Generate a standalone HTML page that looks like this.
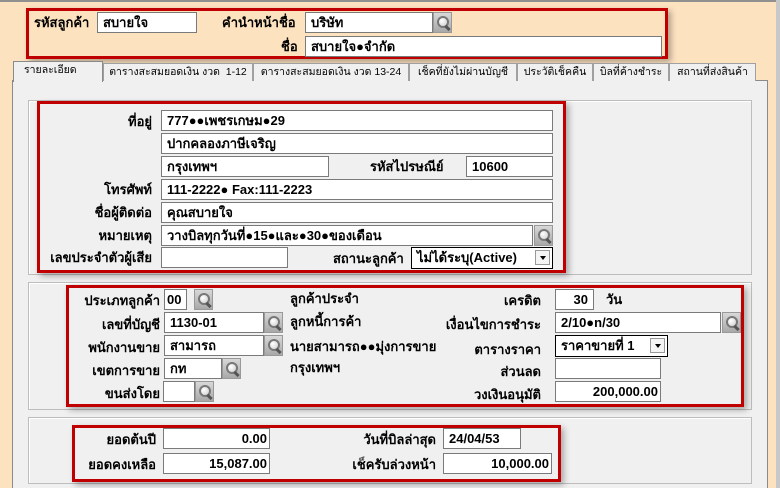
<!DOCTYPE html>
<html><head><meta charset="utf-8"><style>
*{box-sizing:border-box;margin:0;padding:0}
body{width:780px;height:488px;background:#fde2c0;position:relative;overflow:hidden;font-family:Tahoma,"Liberation Sans","DejaVu Sans",sans-serif;font-size:13px;font-weight:bold;color:#000}
.a{position:absolute}
.in{position:absolute;background:#fff;border:1px solid #7a7a7a;height:21px;padding:2px 5px;white-space:nowrap;overflow:hidden;line-height:16px}
.r{text-align:right}
.lb{position:absolute;white-space:nowrap;line-height:16px}
.lr{text-align:right}
.s{position:absolute;width:19px;height:21px;background:linear-gradient(#d8d8d8,#a8a8a8);border:1px solid #999}
.s:before{content:"";position:absolute;left:3px;top:3px;width:8px;height:8px;border:2px solid #777;border-radius:50%;background:radial-gradient(circle at 35% 35%,#fff,#ccc)}
.s:after{content:"";position:absolute;left:12px;top:12px;width:3px;height:6px;background:#555;transform:rotate(-45deg)}
.red{position:absolute;border:3px solid #c00000;box-shadow:3px 3px 6px rgba(0,0,0,.3)}
.grp{position:absolute;border:1px solid #bdbdbd;box-shadow:inset 1px 1px 0 #fff}
.tab{position:absolute;top:63px;height:18px;background:#f0f0f0;border:1px solid #a0a0a0;border-bottom:none;font-weight:normal;font-size:10.5px;text-align:center;line-height:16px;white-space:nowrap;overflow:hidden}
.dd{position:absolute;right:2px;top:2px;width:15px;height:15px;border:1px solid #999;background:#f4f4f4}
.dd:after{content:"";position:absolute;left:4px;top:5px;border-left:3px solid transparent;border-right:3px solid transparent;border-top:4px solid #000}
</style></head><body>
<div class="a" style="left:0;top:0;width:780px;height:2px;background:#909090"></div>
<div class="a" style="left:776px;top:0;width:4px;height:488px;background:#c8c8c8"></div>

<div class="red" style="left:26px;top:8px;width:642px;height:51px"></div>
<div class="lb" style="left:34px;top:15px">รหัสลูกค้า</div>
<div class="in" style="left:97px;top:12px;width:100px">สบายใจ</div>
<div class="lb" style="left:222px;top:15px">คำนำหน้าชื่อ</div>
<div class="in" style="left:305px;top:12px;width:128px">บริษัท</div>
<div class="s" style="left:433px;top:12px"></div>
<div class="lb" style="left:281px;top:39px">ชื่อ</div>
<div class="in" style="left:305px;top:36px;width:357px">สบายใจ●จำกัด</div>

<div class="a" style="left:12px;top:80px;width:756px;height:408px;background:#f0f0f0;border:1px solid #8a8a8a;border-bottom:none"></div>
<div class="tab" style="left:103px;width:150px">ตารางสะสมยอดเงิน งวด &nbsp;1-12</div>
<div class="tab" style="left:253px;width:156px">ตารางสะสมยอดเงิน งวด 13-24</div>
<div class="tab" style="left:409px;width:108px">เช็คที่ยังไม่ผ่านบัญชี</div>
<div class="tab" style="left:517px;width:76px">ประวัติเช็คคืน</div>
<div class="tab" style="left:593px;width:76px">บิลที่ค้างชำระ</div>
<div class="tab" style="left:669px;width:87px">สถานที่ส่งสินค้า</div>
<div class="tab" style="left:13px;top:61px;width:90px;height:21px;border-color:#8a8a8a;text-align:left;padding-left:10px">รายละเอียด</div>

<div class="grp" style="left:28px;top:100px;width:724px;height:175px"></div>
<div class="grp" style="left:28px;top:282px;width:724px;height:128px"></div>
<div class="grp" style="left:28px;top:417px;width:724px;height:67px"></div>

<div class="red" style="left:37px;top:101px;width:529px;height:172px"></div>
<div class="lb lr" style="left:40px;width:112px;top:114px">ที่อยู่</div>
<div class="in" style="left:161px;top:110px;width:392px">777●●เพชรเกษม●29</div>
<div class="in" style="left:161px;top:133px;width:392px">ปากคลองภาษีเจริญ</div>
<div class="in" style="left:161px;top:156px;width:168px">กรุงเทพฯ</div>
<div class="lb" style="left:370px;top:159px">รหัสไปรษณีย์</div>
<div class="in" style="left:466px;top:156px;width:87px">10600</div>
<div class="lb lr" style="left:40px;width:112px;top:182px">โทรศัพท์</div>
<div class="in" style="left:161px;top:179px;width:392px">111-2222● Fax:111-2223</div>
<div class="lb lr" style="left:40px;width:112px;top:205px">ชื่อผู้ติดต่อ</div>
<div class="in" style="left:161px;top:202px;width:392px">คุณสบายใจ</div>
<div class="lb lr" style="left:40px;width:112px;top:228px">หมายเหตุ</div>
<div class="in" style="left:161px;top:225px;width:372px">วางบิลทุกวันที่●15●และ●30●ของเดือน</div>
<div class="s" style="left:534px;top:225px"></div>
<div class="lb lr" style="left:40px;width:112px;top:250px">เลขประจำตัวผู้เสีย</div>
<div class="in" style="left:161px;top:247px;width:127px"></div>
<div class="lb" style="left:333px;top:251px">สถานะลูกค้า</div>
<div class="in" style="left:411px;top:247px;width:142px;border-color:#000;height:22px">ไม่ได้ระบุ(Active)<div class="dd"></div></div>

<div class="red" style="left:66px;top:285px;width:678px;height:122px"></div>
<div class="lb lr" style="left:60px;width:100px;top:293px">ประเภทลูกค้า</div>
<div class="in" style="left:164px;top:289px;width:23px;padding:2px 2px">00</div>
<div class="s" style="left:194px;top:289px"></div>
<div class="lb lr" style="left:60px;width:100px;top:317px">เลขที่บัญชี</div>
<div class="in" style="left:164px;top:312px;width:100px">1130-01</div>
<div class="s" style="left:264px;top:312px"></div>
<div class="lb lr" style="left:60px;width:100px;top:340px">พนักงานขาย</div>
<div class="in" style="left:164px;top:335px;width:100px">สามารถ</div>
<div class="s" style="left:264px;top:335px"></div>
<div class="lb lr" style="left:60px;width:100px;top:363px">เขตการขาย</div>
<div class="in" style="left:164px;top:358px;width:58px">กท</div>
<div class="s" style="left:222px;top:358px"></div>
<div class="lb lr" style="left:60px;width:100px;top:386px">ขนส่งโดย</div>
<div class="in" style="left:163px;top:381px;width:32px"></div>
<div class="s" style="left:195px;top:381px"></div>
<div class="lb" style="left:290px;top:291px">ลูกค้าประจำ</div>
<div class="lb" style="left:290px;top:314px">ลูกหนี้การค้า</div>
<div class="lb" style="left:290px;top:339px;width:176px;overflow:hidden">นายสามารถ●●มุ่งการขาย</div>
<div class="lb" style="left:290px;top:360px">กรุงเทพฯ</div>
<div class="lb lr" style="left:400px;width:141px;top:293px">เครดิต</div>
<div class="in r" style="left:555px;top:289px;width:39px">30</div>
<div class="lb" style="left:606px;top:292px">วัน</div>
<div class="lb lr" style="left:400px;width:141px;top:317px">เงื่อนไขการชำระ</div>
<div class="in" style="left:555px;top:312px;width:166px">2/10●n/30</div>
<div class="s" style="left:722px;top:312px"></div>
<div class="lb lr" style="left:400px;width:141px;top:342px">ตารางราคา</div>
<div class="in" style="left:555px;top:335px;width:113px;border-color:#000;height:22px">ราคาขายที่ 1<div class="dd"></div></div>
<div class="lb lr" style="left:400px;width:141px;top:364px">ส่วนลด</div>
<div class="in" style="left:555px;top:358px;width:106px"></div>
<div class="lb lr" style="left:400px;width:141px;top:387px">วงเงินอนุมัติ</div>
<div class="in r" style="left:555px;top:381px;width:106px;padding-right:2px">200,000.00</div>

<div class="red" style="left:72px;top:425px;width:489px;height:57px"></div>
<div class="lb lr" style="left:60px;width:96px;top:432px">ยอดต้นปี</div>
<div class="in r" style="left:163px;top:428px;width:107px;padding-right:2px">0.00</div>
<div class="lb lr" style="left:60px;width:96px;top:457px">ยอดคงเหลือ</div>
<div class="in r" style="left:163px;top:453px;width:107px;padding-right:2px">15,087.00</div>
<div class="lb lr" style="left:300px;width:136px;top:432px">วันที่บิลล่าสุด</div>
<div class="in" style="left:443px;top:428px;width:78px">24/04/53</div>
<div class="lb lr" style="left:300px;width:136px;top:457px">เช็ครับล่วงหน้า</div>
<div class="in r" style="left:443px;top:453px;width:109px;padding-right:2px">10,000.00</div>
</body></html>
